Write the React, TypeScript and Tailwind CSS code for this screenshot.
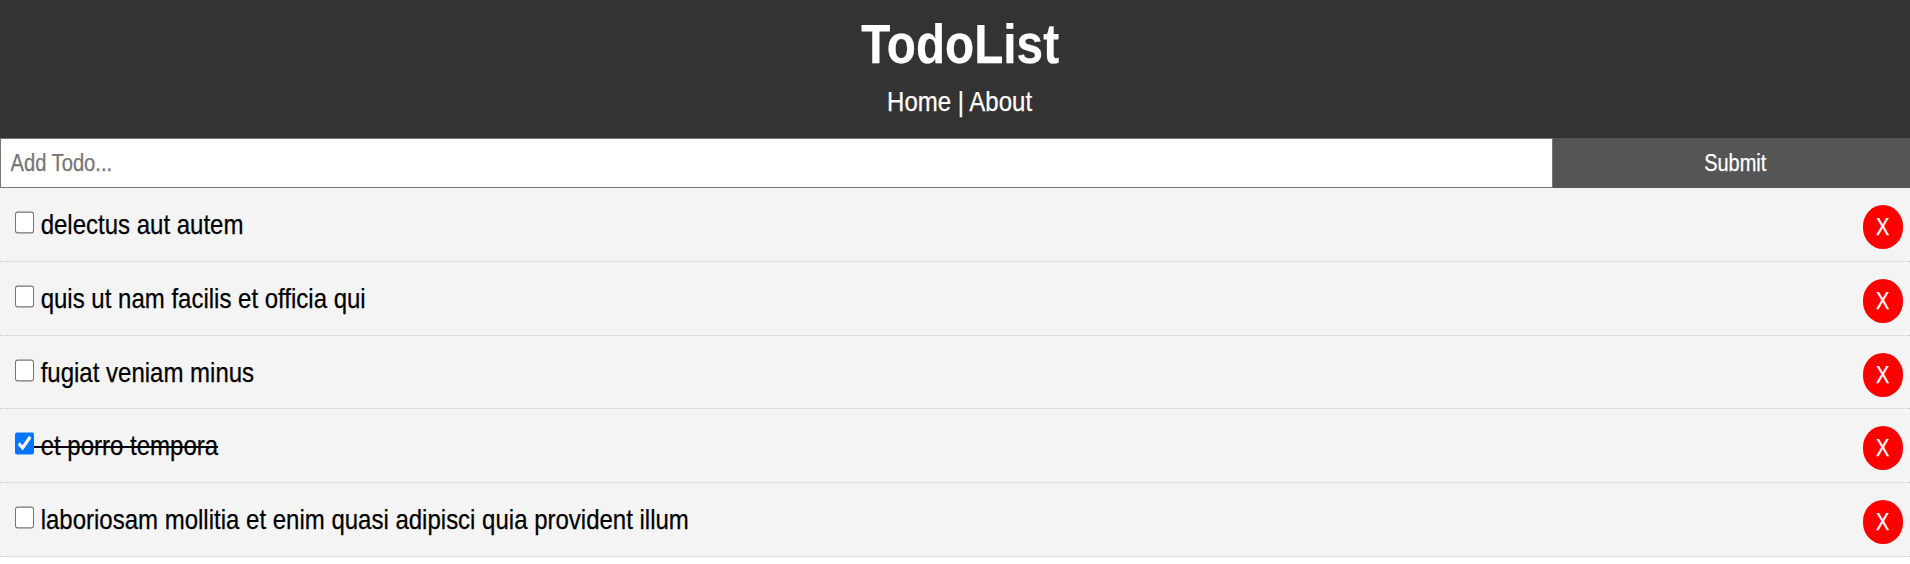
import { useState } from "react";

const initial = [
  { id: 1, title: "delectus aut autem", completed: false },
  { id: 2, title: "quis ut nam facilis et officia qui", completed: false },
  { id: 3, title: "fugiat veniam minus", completed: false },
  { id: 4, title: "et porro tempora", completed: true },
  { id: 5, title: "laboriosam mollitia et enim quasi adipisci quia provident illum", completed: false },
];

export default function App() {
  const [todos, setTodos] = useState(initial);
  const toggle = (id: number) =>
    setTodos(todos.map((t) => (t.id === id ? { ...t, completed: !t.completed } : t)));
  const remove = (id: number) => setTodos(todos.filter((t) => t.id !== id));

  return (
    <div className="h-[564px] overflow-hidden bg-white font-['Liberation_Sans',Arial,sans-serif] text-black [-webkit-text-stroke:0.25px]">
      <header className="flex h-[138px] flex-col items-center bg-[#333] pt-[12px] pl-[10px] text-white">
        <h1 className="scale-x-[0.852] text-[56px] leading-[64px] font-bold">TodoList</h1>
        <nav className="mt-[10px] scale-x-[0.857] text-[28px] leading-[32px]">
          <a>Home</a> | <a>About</a>
        </nav>
      </header>
      <form className="flex h-[50px]" onSubmit={(e) => e.preventDefault()}>
        <div className="w-[1552.5px] overflow-hidden border border-[#767676] bg-white">
          <input
            placeholder="Add Todo..."
            className="h-full w-[1810px] origin-left scale-x-[0.865] bg-white pl-[11px] text-[23.3px] outline-none placeholder:text-[#757575]"
          />
        </div>
        <button className="flex-1 bg-[#555] pl-[9px] text-[23.3px] text-white">
          <span className="inline-block scale-x-[0.857]">Submit</span>
        </button>
      </form>
      {todos.map((t) => (
        <div
          key={t.id}
          className="flex h-[73.8px] items-start justify-between border-b border-dotted border-[#ccc] bg-[#f4f4f4] pt-[17px] pr-[7px] pl-[15px]"
        >
          <label className="flex items-start text-[28px] leading-[40px]">
            <input
              type="checkbox"
              checked={t.completed}
              onChange={() => toggle(t.id)}
              className="mt-[8px] h-[19px] w-[19px] scale-y-[1.16]"
            />
            <span
              className={
                t.completed
                  ? "inline-block origin-left scale-x-[0.857] whitespace-pre line-through decoration-2"
                  : "inline-block origin-left scale-x-[0.857] whitespace-pre"
              }
            >
              {" " + t.title}
            </span>
          </label>
          <button onClick={() => remove(t.id)} className="h-[44px] w-[40px] rounded-[20px/21px] bg-[#f00] text-[23.3px] leading-[42px] text-white">
            <span className="inline-block scale-x-[0.857]">X</span>
          </button>
        </div>
      ))}
    </div>
  );
}
